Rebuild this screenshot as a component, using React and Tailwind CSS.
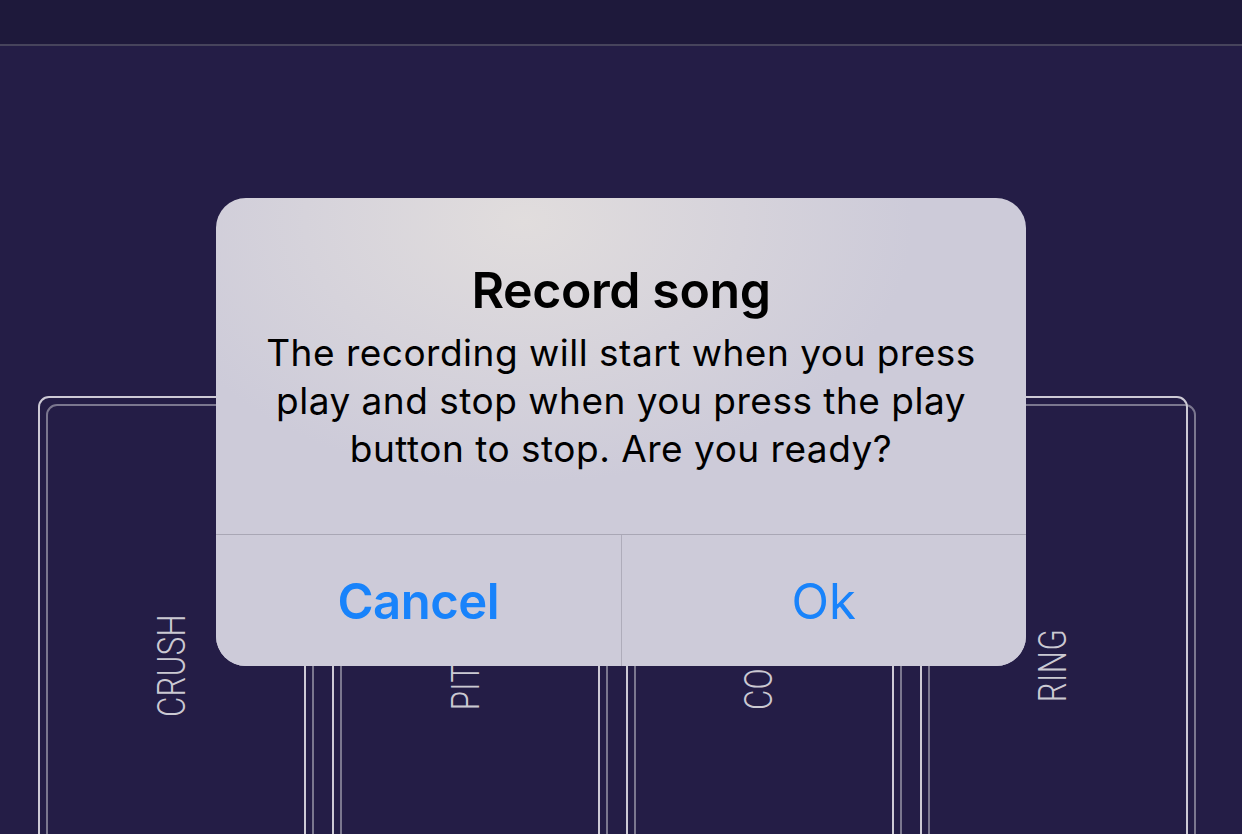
import React from "react";

const pads = ["CRUSH", "PITCH", "COMB", "RING"];

const EffectPad = ({ label }) => {
  return (
    <div className="relative h-[538px]">
      {/* offset outline */}
      <div className="absolute inset-0 translate-x-2 translate-y-2 rounded-[11px] border-2 border-[#7b778f]" />
      <div className="relative h-full rounded-[11px] border-2 border-[#cdcad5] flex items-center justify-center">
        <span className="block -rotate-90 scale-x-[0.8] text-[39px] leading-none font-light tracking-[0.5px] text-[#cbc9d2] font-['Roboto',sans-serif]">
          {label}
        </span>
      </div>
    </div>
  );
};

const App = () => {
  return (
    <div className="relative w-[1242px] h-[834px] overflow-hidden bg-[#241d46] font-['Inter',sans-serif]">
      {/* Top bar */}
      <div className="h-[46px] bg-[#1e193b] border-b-2 border-[#47445c]" />

      {/* Effect pads */}
      <div className="pl-[38px] pt-[350px]">
        <div className="grid grid-cols-[268px_268px_268px_268px] gap-[26px]">
          {pads.map((p) => (
            <EffectPad key={p} label={p} />
          ))}
        </div>
      </div>

      {/* Alert */}
      <div className="absolute inset-0 flex justify-center pt-[198px]">
        <div className="w-[810px] h-[468px] rounded-[30px] overflow-hidden flex flex-col bg-[radial-gradient(ellipse_60%_70%_at_38%_5%,#e1dddd_0%,#d6d3db_45%,#cdcbd9_80%)]">
          <div className="h-[336px] pt-[62px] flex flex-col items-center text-black">
            <div className="text-[50px] leading-[60px] font-semibold tracking-[-0.4px]">
              Record song
            </div>
            <div className="mt-[9px] text-[37px] leading-[48px] text-center tracking-[0.5px] whitespace-nowrap">
              The recording will start when you press
              <br />
              play and stop when you press the play
              <br />
              button to stop. Are you ready?
            </div>
          </div>
          <div className="flex-1 flex border-t border-[#a9a7b5] bg-[#cdcbd9]">
            <button className="flex-1 flex items-center justify-center text-[49px] font-semibold text-[#1883fb] tracking-[-0.5px] pt-[3px]">
              Cancel
            </button>
            <div className="w-px bg-[#aeacba]" />
            <button className="flex-1 flex items-center justify-center text-[49px] text-[#1883fb] pt-[3px]">
              Ok
            </button>
          </div>
        </div>
      </div>
    </div>
  );
};

export default App;
